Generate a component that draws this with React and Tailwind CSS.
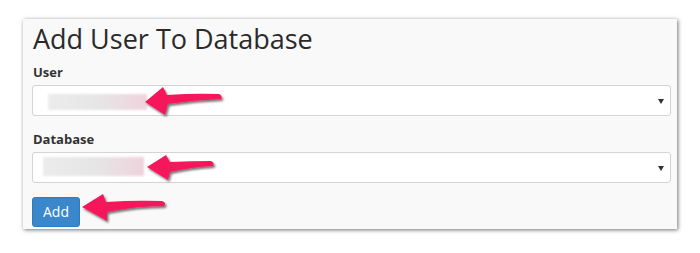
import React from "react";

function Select({ phClass }) {
  return (
    <div className="relative h-[31px] w-full rounded-[3px] border border-[#d4d4d4] bg-white">
      <div className={phClass} />
      <svg className="absolute right-[6px] top-[13px]" width="6" height="5" viewBox="0 0 6 5">
        <path d="M0 0 L6 0 L3 5 Z" fill="#333" />
      </svg>
    </div>
  );
}

export default function App() {
  return (
    <div className="relative h-[253px] w-[700px] bg-white pl-[23px] pt-[19px]" style={{ fontFamily: '"Open Sans", "Noto Sans", sans-serif' }}>
      <div className="flex h-[210px] w-[654px] flex-col bg-[#f9f9f9] pl-[9px] pr-[6px] pt-[4px] shadow-[1px_1px_4px_rgba(0,0,0,0.55)]">
        <h1 className="pl-[1px] text-[27px] font-normal leading-[32px] text-[#2a2a2a]">Add User To Database</h1>
        <label className="mt-[8px] pl-[1px] text-[13px] font-bold leading-[18px] text-[#333]">User</label>
        <div className="mt-[4px]">
          <Select phClass="absolute left-[15px] top-[8px] h-[16px] w-[99px] bg-gradient-to-r from-[#ececec] via-[#e6e6e6] to-[#efd3dc] blur-[1px]" />
        </div>
        <label className="mt-[14px] pl-[1px] text-[13px] font-bold leading-[18px] text-[#333]">Database</label>
        <div className="mt-[4px]">
          <Select phClass="absolute left-[10px] top-[4px] h-[19px] w-[101px] bg-gradient-to-r from-[#ececec] via-[#e6e6e6] to-[#efd3dc] blur-[1px]" />
        </div>
        <div className="mt-[14px]">
          <button className="h-[30px] w-[48px] rounded-[3px] border border-[#2f79bd] bg-[#3a87cc] text-[14px] leading-[28px] text-white">Add</button>
        </div>
      </div>
      <svg className="pointer-events-none absolute left-0 top-0" width="700" height="253" viewBox="0 0 700 253">
        <defs>
          <filter id="sh" x="-20%" y="-40%" width="150%" height="200%">
            <feDropShadow dx="1.5" dy="2" stdDeviation="1.2" floodColor="#000" floodOpacity="0.55" />
          </filter>
        </defs>
        <g fill="#f5185c" filter="url(#sh)">
          <path d="M145,102 L163,87 L167,95 Q195,93 219,94 Q223,96 221,99 Q195,100 168,104 L165,115 Z" />
          <path d="M147,167 L166,155 L170,162 Q192,161 211,161 Q215,163 213,166 Q192,167 170,172 L168,180 Z" />
          <path d="M82,207 L103,194 L106,202 Q135,200 162,201 Q167,203 164,206 Q135,206 107,212 L107,221 Z" />
        </g>
      </svg>
    </div>
  );
}
